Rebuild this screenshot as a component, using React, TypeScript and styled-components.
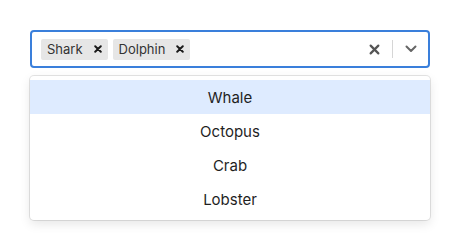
import React from "react";
import styled, { createGlobalStyle } from "styled-components";

const GlobalStyle = createGlobalStyle`
  html, body {
    margin: 0;
    padding: 0;
    background: #ffffff;
  }
  body {
    font-family: Inter, "Noto Sans", sans-serif;
    color: #1f1f1f;
  }
`;

const Page = styled.div`
  padding: 30px 30px;
  width: 400px;
`;

const Control = styled.div`
  box-sizing: border-box;
  display: flex;
  align-items: center;
  height: 38px;
  border: 2px solid #3a7fdb;
  border-radius: 4px;
  background: #fff;
  padding: 0 4px 0 9px;
`;

const Values = styled.div`
  flex: 1;
  display: flex;
  align-items: center;
  gap: 5px;
`;

const Chip = styled.div`
  display: flex;
  align-items: center;
  height: 21px;
  background: #e6e6e6;
  border-radius: 2px;
`;

const ChipLabel = styled.span`
  font-size: 13px;
  color: #333;
  padding: 0 6px 0 6px;
  line-height: 21px;
`;

const ChipRemove = styled.span`
  display: flex;
  align-items: center;
  justify-content: center;
  padding: 0 6px 0 5px;
  height: 100%;
`;

const Indicators = styled.div`
  display: flex;
  align-items: center;
`;

const IconButton = styled.span`
  display: flex;
  align-items: center;
  justify-content: center;
  width: 26px;
  height: 20px;
`;

const Separator = styled.span`
  width: 1px;
  height: 18px;
  margin: 0 5px;
  background: #d6d6d6;
`;

const Menu = styled.div`
  margin-top: 8px;
  background: #fff;
  border-radius: 4px;
  padding: 4px 0;
  box-shadow: 0 0 0 1px rgba(0, 0, 0, 0.1), 0 4px 11px rgba(0, 0, 0, 0.1);
`;

const Option = styled.div<{ $active?: boolean }>`
  box-sizing: border-box;
  height: 34px;
  padding-top: 1px;
  line-height: 33px;
  text-align: center;
  font-size: 15px;
  color: #1f1f1f;
  background: ${(p) => (p.$active ? "#deebff" : "transparent")};
`;

const Cross = ({ size, color, weight }: { size: number; color: string; weight: number }) => (
  <svg width={size} height={size} viewBox="0 0 10 10">
    <path d="M1.5 1.5 L8.5 8.5 M8.5 1.5 L1.5 8.5" stroke={color} strokeWidth={weight} strokeLinecap="round" />
  </svg>
);

const Chevron = () => (
  <svg width="12" height="8" viewBox="0 0 12 8">
    <path d="M1.5 1.5 L6 6 L10.5 1.5" stroke="#666" strokeWidth="2" fill="none" strokeLinecap="round" strokeLinejoin="round" />
  </svg>
);

const selected = ["Shark", "Dolphin"];
const options = ["Whale", "Octopus", "Crab", "Lobster"];

export default function App() {
  return (
    <>
      <GlobalStyle />
      <Page>
        <Control>
          <Values>
            {selected.map((s) => (
              <Chip key={s}>
                <ChipLabel>{s}</ChipLabel>
                <ChipRemove>
                  <Cross size={8} color="#1a1a1a" weight={2.4} />
                </ChipRemove>
              </Chip>
            ))}
          </Values>
          <Indicators>
            <IconButton>
              <Cross size={11} color="#555" weight={2} />
            </IconButton>
            <Separator />
            <IconButton>
              <Chevron />
            </IconButton>
          </Indicators>
        </Control>
        <Menu>
          {options.map((o, i) => (
            <Option key={o} $active={i === 0}>
              {o}
            </Option>
          ))}
        </Menu>
      </Page>
    </>
  );
}
